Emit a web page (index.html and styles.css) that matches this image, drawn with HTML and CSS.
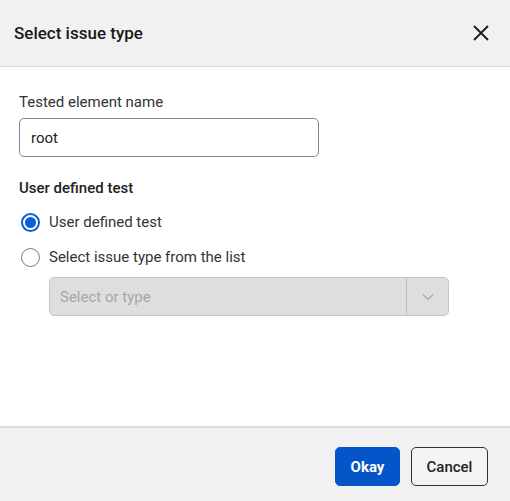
FILE: index.html
```html
<!DOCTYPE html>
<html lang="en">
<head>
    <meta charset="UTF-8">
    <title>Select issue type</title>
    <link rel="stylesheet" href="styles.css">
</head>
<body>
    <div class="dialog">
        <div class="dialog-header">
            <h1 class="dialog-title">Select issue type</h1>
            <button class="close-btn" aria-label="Close">
                <svg width="16" height="16" viewBox="0 0 16 16">
                    <path d="M1 1 L15 15 M15 1 L1 15" stroke="#1a1a1a" stroke-width="1.8" fill="none"/>
                </svg>
            </button>
        </div>

        <div class="dialog-body">
            <label class="field-label" for="elname">Tested element name</label>
            <input class="text-input" id="elname" type="text" value="root">

            <div class="group-title">User defined test</div>

            <label class="radio-row">
                <span class="radio checked"></span>
                <span>User defined test</span>
            </label>
            <label class="radio-row">
                <span class="radio"></span>
                <span>Select issue type from the list</span>
            </label>

            <div class="combo disabled">
                <span class="combo-text">Select or type</span>
                <span class="combo-arrow">
                    <svg width="12" height="8" viewBox="0 0 12 8">
                        <path d="M1 1.5 L6 6.5 L11 1.5" stroke="#a8a8a8" stroke-width="1.2" fill="none"/>
                    </svg>
                </span>
            </div>
        </div>

        <div class="dialog-footer">
            <button class="btn btn-primary">Okay</button>
            <button class="btn btn-secondary">Cancel</button>
        </div>
    </div>
</body>
</html>
```

FILE: styles.css
```css
* {
    box-sizing: border-box;
    margin: 0;
    padding: 0;
}

body {
    font-family: Roboto, 'Liberation Sans', sans-serif;
    color: #222;
    background: #fff;
}

.dialog {
    display: flex;
    flex-direction: column;
    height: 100vh;
}

.dialog-header {
    height: 67px;
    background: #f1f1f1;
    border-bottom: 1px solid #dcdcdc;
    display: flex;
    align-items: center;
    justify-content: space-between;
    padding: 0 20px 0 14px;
}

.dialog-title {
    font-size: 17px;
    font-weight: 500;
    color: #1a1a1a;
    margin-top: -1px;
}

.close-btn {
    border: none;
    background: none;
    width: 18px;
    height: 18px;
    display: flex;
    align-items: center;
    justify-content: center;
    cursor: pointer;
}

.dialog-body {
    flex: 1;
    padding: 25px 19px 0 19px;
    display: flex;
    flex-direction: column;
    align-items: flex-start;
}

.field-label {
    font-size: 15px;
    line-height: 20px;
    color: #333;
}

.text-input {
    margin-top: 6px;
    width: 300px;
    height: 39px;
    border: 1px solid #8a8a8a;
    border-radius: 5px;
    padding: 0 11px;
    font-family: inherit;
    font-size: 15px;
    color: #222;
    outline: none;
}

.group-title {
    margin-top: 21px;
    font-size: 15px;
    line-height: 20px;
    font-weight: 500;
    color: #222;
}

.radio-row {
    display: flex;
    align-items: center;
    gap: 9px;
    font-size: 15px;
    line-height: 24px;
    color: #333;
    margin-top: 11px;
    padding-left: 2px;
}

.group-title + .radio-row {
    margin-top: 12px;
}

.radio {
    width: 19px;
    height: 19px;
    border-radius: 50%;
    border: 1px solid #7a7a7a;
    background: #fff;
    display: flex;
    align-items: center;
    justify-content: center;
}

.radio.checked {
    border: 2px solid #0b5fd6;
}

.radio.checked::after {
    content: '';
    width: 11px;
    height: 11px;
    border-radius: 50%;
    background: #0b5fd6;
}

.combo {
    margin-top: 8px;
    margin-left: 30px;
    width: 400px;
    height: 39px;
    display: flex;
    border: 1px solid #c6c6c6;
    border-radius: 5px;
    background: #dedede;
}

.combo-text {
    flex: 1;
    display: flex;
    align-items: center;
    padding-left: 10px;
    font-size: 15px;
    color: #a6a6a6;
}

.combo-arrow {
    width: 42px;
    border-left: 1px solid #bcbcbc;
    display: flex;
    align-items: center;
    justify-content: center;
}

.dialog-footer {
    height: 75px;
    background: #f1f1f1;
    border-top: 2px solid #dcdcdc;
    display: flex;
    justify-content: flex-end;
    align-items: flex-start;
    gap: 11px;
    padding: 19px 22px 0 0;
}

.btn {
    height: 39px;
    border-radius: 5px;
    font-family: inherit;
    font-size: 15px;
    cursor: pointer;
}

.btn-primary {
    width: 65px;
    background: #0455c9;
    border: 1px solid #0455c9;
    color: #fff;
    font-weight: 700;
}

.btn-secondary {
    width: 77px;
    background: #f4f4f4;
    border: 1px solid #333;
    color: #222;
    font-weight: 500;
}
```
